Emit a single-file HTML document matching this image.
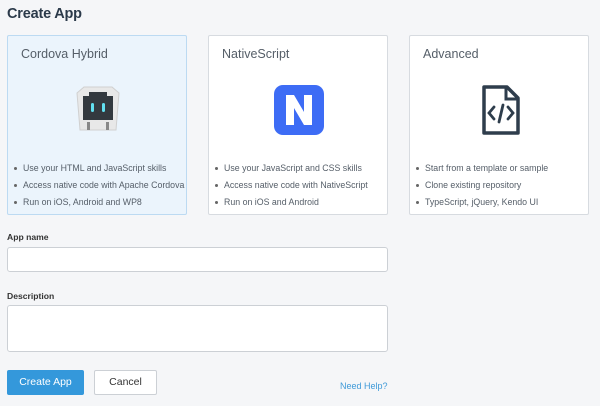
<!DOCTYPE html>
<html><head><style>
*{box-sizing:border-box;margin:0;padding:0}
body{width:600px;height:406px;background:#f5f6f8;font-family:"Liberation Sans",sans-serif;position:relative;overflow:hidden;color:#2b3a4a}
.abs{position:absolute}
h1{position:absolute;left:7px;top:6px;font-size:14.5px;font-weight:bold;color:#2b3a4a;letter-spacing:-0.2px}
.card{position:absolute;top:35px;width:180px;height:180px;background:#fff;border:1px solid #d7dbe0;border-radius:2px}
.card.sel{background:#ebf4fc;border-color:#bcdaf2}
.card .t{position:absolute;left:13px;top:11px;font-size:12.5px;color:#555e68}
.card ul{position:absolute;left:6px;top:126px;list-style:none;font-size:8.8px;color:#555e68}
.card li{height:17px;line-height:12px;white-space:nowrap}
.card li:before{content:"";display:inline-block;width:3px;height:3px;border-radius:50%;background:#666;margin-right:6px;vertical-align:middle}
.ic{position:absolute;left:64px;top:48px;width:52px;height:52px}
label{position:absolute;left:7px;font-size:8.6px;font-weight:bold;color:#333}
.inp{position:absolute;left:7px;width:381px;background:#fff;border:1px solid #ccd0d5;border-radius:3px}
.btn{position:absolute;top:370px;height:25px;border-radius:2px;font-size:10.5px;text-align:center;line-height:25px}
</style></head><body>
<h1>Create App</h1>
<div class="card sel" style="left:7px">
<div class="t">Cordova Hybrid</div>
<svg class="ic" viewBox="0 0 52 52"><path d="M5 9 L12 3 H40 L47 9 L44 46 H8 Z" fill="#e8e8e8" stroke="#d0d0d0"/><path d="M11 12 H17 V8 H35 V12 H41 V36 H11 Z" fill="#33393f"/><rect x="19" y="19" width="3" height="9" rx="1.5" fill="#62e0f0"/><rect x="30" y="19" width="3" height="9" rx="1.5" fill="#62e0f0"/><rect x="15" y="38" width="3" height="8" fill="#888"/><rect x="34" y="38" width="3" height="8" fill="#888"/></svg>
<ul><li>Use your HTML and JavaScript skills</li><li>Access native code with Apache Cordova</li><li>Run on iOS, Android and WP8</li></ul>
</div>
<div class="card" style="left:208px">
<div class="t">NativeScript</div>
<svg class="ic" viewBox="0 0 52 52"><rect x="1" y="1" width="50" height="50" rx="9" fill="#3d6cf5"/><path d="M13 11 H21 L31 28 V11 H39 V41 H31 L21 24 V41 H13 Z" fill="#fff"/><path d="M11 20 q-2 0 -2 2 v2 q0 2 -2 2 q2 0 2 2 v2 q0 2 2 2" stroke="#3d6cf5" stroke-width="1.5" fill="none"/><path d="M41 20 q2 0 2 2 v2 q0 2 2 2 q-2 0 -2 2 v2 q0 2 -2 2" stroke="#3d6cf5" stroke-width="1.5" fill="none"/></svg>
<ul><li>Use your JavaScript and CSS skills</li><li>Access native code with NativeScript</li><li>Run on iOS and Android</li></ul>
</div>
<div class="card" style="left:409px">
<div class="t">Advanced</div>
<svg class="ic" viewBox="0 0 52 52"><path d="M10 3 H33 L44 14 V49 H10 Z" fill="none" stroke="#2e3d4c" stroke-width="3.5" stroke-linejoin="round"/><path d="M32 3 V15 H44" fill="none" stroke="#2e3d4c" stroke-width="3"/><path d="M20 23 L15 29 L20 35 M34 23 L39 29 L34 35 M29 21 L25 38" fill="none" stroke="#2e3d4c" stroke-width="2.8" stroke-linecap="round"/></svg>
<ul><li>Start from a template or sample</li><li>Clone existing repository</li><li>TypeScript, jQuery, Kendo UI</li></ul>
</div>
<label style="top:232px">App name</label>
<div class="inp" style="top:247px;height:25px"></div>
<label style="top:291px">Description</label>
<div class="inp" style="top:305px;height:47px"></div>
<div class="btn" style="left:7px;width:77px;background:#3498db;color:#fff">Create App</div>
<div class="btn" style="left:94px;width:63px;background:#fff;border:1px solid #ccd0d5;color:#333;line-height:23px">Cancel</div>
<div class="abs" style="left:340px;top:381px;font-size:9px;color:#3f9ad8">Need Help?</div>
</body></html>
